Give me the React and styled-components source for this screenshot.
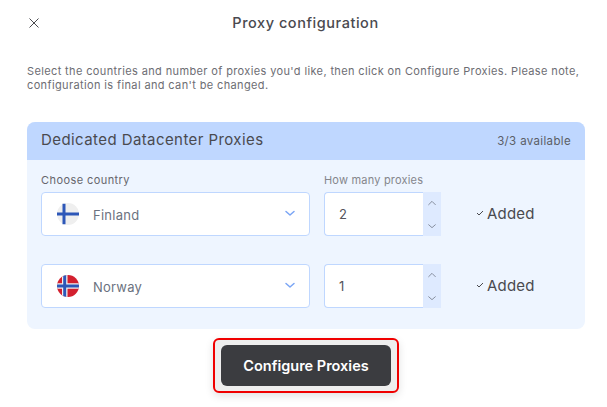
import React from 'react';
import styled, { createGlobalStyle } from 'styled-components';

const GlobalStyle = createGlobalStyle`
  html, body { margin: 0; padding: 0; background: #fff; }
  body { font-family: Inter, "Open Sans", sans-serif; }
`;

const Chevron = ({ up, size = 12, color = '#7aa5f5', width = 1.5 }) => (
  <svg width={size} height={size} viewBox="0 0 12 12" fill="none">
    <path
      d={up ? 'M2 8l4-4 4 4' : 'M2 4.5l4 3.5 4-3.5'}
      stroke={color}
      strokeWidth={width}
      strokeLinecap="round"
      strokeLinejoin="round"
    />
  </svg>
);

const FinlandFlag = () => (
  <svg width="22" height="22" viewBox="0 0 22 22">
    <circle cx="11" cy="11" r="11" fill="#efefef" />
    <path d="M5.5 0.7h3v20.6h-3zM0 9.5h22v3H0z" fill="#2d57b8" />
  </svg>
);

const NorwayFlag = () => (
  <svg width="22" height="22" viewBox="0 0 22 22">
    <defs>
      <clipPath id="no-clip">
        <circle cx="11" cy="11" r="11" />
      </clipPath>
    </defs>
    <g clipPath="url(#no-clip)">
      <rect width="22" height="22" fill="#d3202f" />
      <path d="M5 0h5.5v22H5zM0 8.2h22v5.6H0z" fill="#f0f0f0" />
      <path d="M6.2 0h3v22h-3zM0 9.5h22v3H0z" fill="#2d57b8" />
    </g>
  </svg>
);

const rows = [
  { country: 'Finland', flag: <FinlandFlag />, count: '2' },
  { country: 'Norway', flag: <NorwayFlag />, count: '1' },
];

const App = () => (
  <Page>
    <GlobalStyle />
    <TopBar>
      <CloseButton>
        <svg width="12" height="12" viewBox="0 0 12 12" fill="none">
          <path d="M1.5 1.5l9 9M10.5 1.5l-9 9" stroke="#4a4a4f" strokeWidth="1" />
        </svg>
      </CloseButton>
      <Title>Proxy configuration</Title>
    </TopBar>
    <Intro>
      Select the countries and number of proxies you'd like, then click on Configure Proxies. Please note,
      <br />
      configuration is final and can't be changed.
    </Intro>
    <Card>
      <CardHeader>
        <CardTitle>Dedicated Datacenter Proxies</CardTitle>
        <Available>3/3 available</Available>
      </CardHeader>
      <CardBody>
        <Labels>
          <FieldLabel>Choose country</FieldLabel>
          <FieldLabel $muted>How many proxies</FieldLabel>
        </Labels>
        <RowList>
          {rows.map((row) => (
            <Row key={row.country}>
              <Select>
                <FlagWrap>{row.flag}</FlagWrap>
                <CountryName>{row.country}</CountryName>
                <Chevron />
              </Select>
              <NumberField>
                <NumberValue>{row.count}</NumberValue>
                <Stepper>
                  <Chevron up size={10} color="#7f8796" width={1.1} />
                  <Chevron size={10} color="#7f8796" width={1.1} />
                </Stepper>
              </NumberField>
              <AddedTag>
                <svg width="8" height="8" viewBox="0 0 8 8" fill="none">
                  <path d="M1 4l2 2 4-4" stroke="#4a4a4f" strokeWidth="1" />
                </svg>
                Added
              </AddedTag>
            </Row>
          ))}
        </RowList>
      </CardBody>
    </Card>
    <Footer>
      <Highlight>
        <ConfigureButton>Configure Proxies</ConfigureButton>
      </Highlight>
    </Footer>
  </Page>
);

export default App;

const Page = styled.div`
  width: 607px;
  height: 407px;
  box-sizing: border-box;
  padding: 0 22px 0 27px;
  overflow: hidden;
`;
const TopBar = styled.div`
  height: 46px;
  display: flex;
  align-items: center;
  justify-content: center;
  position: relative;
`;
const CloseButton = styled.div`
  position: absolute;
  left: 1px;
  top: 17px;
  width: 12px;
  height: 12px;
  display: flex;
`;
const Title = styled.div`
  font-size: 14.5px;
  font-weight: 500;
  color: #4a4a4f;
  letter-spacing: 0.55px;
  margin: -2px 0 0 -1px;
`;
const Intro = styled.p`
  margin: 18px 0 0;
  font-size: 11px;
  line-height: 14px;
  color: #6d6d73;
  white-space: nowrap;
  letter-spacing: 0.37px;
`;
const Card = styled.section`
  margin-top: 30px;
  width: 558px;
  height: 207px;
  border-radius: 8px;
  overflow: hidden;
  background: #eef5ff;
`;
const CardHeader = styled.header`
  height: 38px;
  display: flex;
  align-items: center;
  justify-content: space-between;
  padding: 0 14px;
  background: #bfd7ff;
`;
const CardTitle = styled.h2`
  margin: -3px 0 0;
  font-size: 15px;
  font-weight: 400;
  color: #4a4a4f;
  letter-spacing: 0.42px;
`;
const Available = styled.span`
  font-size: 11.5px;
  color: #5b5e66;
  letter-spacing: 0.35px;
`;
const CardBody = styled.div`
  padding: 13px 14px 0;
`;
const Labels = styled.div`
  display: grid;
  grid-template-columns: 283px auto;
  height: 19px;
  align-items: start;
`;
const FieldLabel = styled.span`
  font-size: 11px;
  line-height: 14px;
  color: ${(p) => (p.$muted ? '#85868c' : '#66666c')};
  letter-spacing: ${(p) => (p.$muted ? '0.2px' : '0.42px')};
`;
const RowList = styled.div`
  display: flex;
  flex-direction: column;
  gap: 28px;
`;
const Row = styled.div`
  display: flex;
  align-items: center;
  height: 44px;
`;
const Select = styled.div`
  width: 269px;
  height: 44px;
  box-sizing: border-box;
  display: flex;
  align-items: center;
  padding: 0 13px 2px 15px;
  background: #fff;
  border: 1px solid #bfd7ff;
  border-radius: 4px;
`;
const FlagWrap = styled.span`
  display: flex;
  width: 22px;
  height: 22px;
  margin-top: 2px;
`;
const CountryName = styled.span`
  flex: 1;
  margin-left: 14px;
  margin-top: 3px;
  font-size: 13px;
  color: #6b7280;
  letter-spacing: 0.25px;
`;
const NumberField = styled.div`
  margin-left: 14px;
  width: 117px;
  height: 44px;
  display: flex;
`;
const NumberValue = styled.div`
  flex: 1;
  box-sizing: border-box;
  display: flex;
  align-items: center;
  padding: 0 0 1px 14px;
  background: #fff;
  border: 1px solid #bfd7ff;
  border-radius: 4px 0 0 4px;
  border-right: none;
  font-size: 13px;
  color: #55555b;
`;
const Stepper = styled.div`
  width: 18px;
  background: #deeaff;
  display: flex;
  flex-direction: column;
  justify-content: space-between;
  align-items: center;
  padding: 6px 0 5px;
  box-sizing: border-box;
`;
const AddedTag = styled.div`
  margin-left: 35px;
  display: flex;
  align-items: center;
  gap: 3px;
  font-size: 15px;
  letter-spacing: 0.2px;
  color: #4a4a4f;
  margin-top: -2px;
`;
const Footer = styled.div`
  display: flex;
  justify-content: center;
  margin-top: 9px;
  padding-left: 0;
`;
const Highlight = styled.div`
  box-sizing: border-box;
  width: 186px;
  height: 55px;
  padding: 5px 6px 5px 6px;
  border: 2px solid #f00000;
  border-radius: 6px;
  background: #eeeeee;
  box-shadow: 0 3px 8px rgba(0, 0, 0, 0.12);
  display: flex;
`;
const ConfigureButton = styled.button`
  flex: 1;
  margin: 0;
  padding: 0 0 1px;
  border: none;
  border-radius: 6px;
  background: #3b3c40;
  color: #fff;
  font-family: inherit;
  font-size: 14.5px;
  font-weight: 600;
`;
